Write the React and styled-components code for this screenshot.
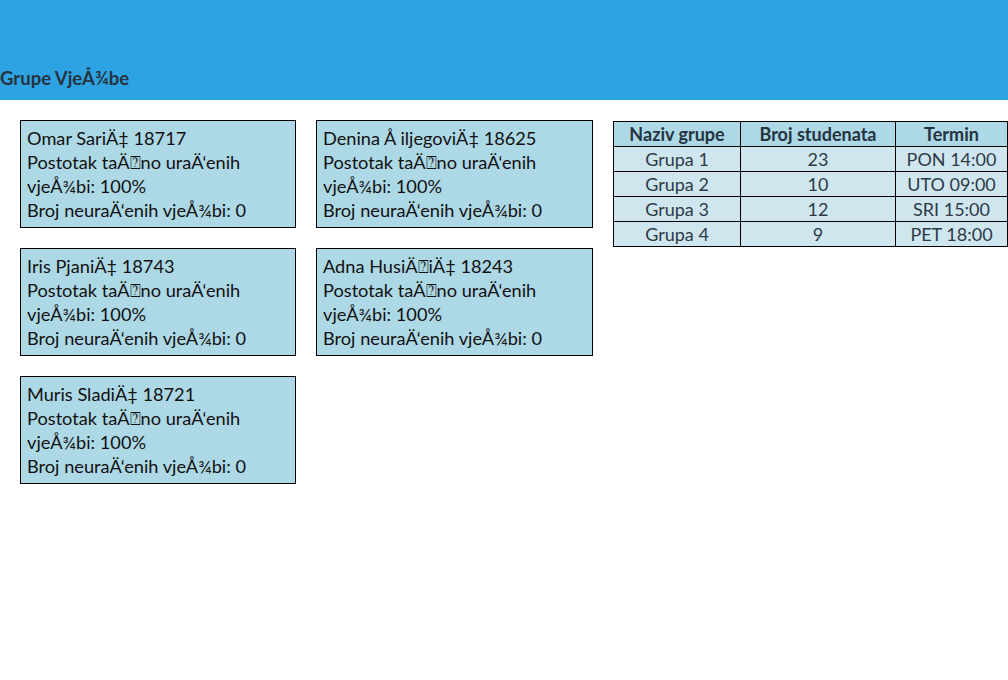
import React from 'react'
import styled, { createGlobalStyle } from 'styled-components'

const students = [
    { name: 'Omar SariÄ‡', index: 18717 },
    { name: 'Denina Å\u00a0iljegoviÄ‡', index: 18625 },
    { name: 'Iris PjaniÄ‡', index: 18743 },
    { name: 'Adna HusiÄ\u2370iÄ‡', index: 18243 },
    { name: 'Muris SladiÄ‡', index: 18721 },
]

const groups = [
    { name: 'Grupa 1', count: 23, term: 'PON 14:00' },
    { name: 'Grupa 2', count: 10, term: 'UTO 09:00' },
    { name: 'Grupa 3', count: 12, term: 'SRI 15:00' },
    { name: 'Grupa 4', count: 9, term: 'PET 18:00' },
]

export default function App() {
    return (
        <>
            <GlobalStyle />
            <Header>
                <Title>Grupe VjeÅ¾be</Title>
            </Header>
            <Content>
                <CardGrid>
                    {students.map(s => (
                        <Card key={s.index}>
                            {s.name} {s.index}<br />
                            Postotak taÄ{'\u2370'}no uraÄ‘enih vjeÅ¾bi: 100%<br />
                            Broj neuraÄ‘enih vjeÅ¾bi: 0
                        </Card>
                    ))}
                </CardGrid>
                <Table>
                    <thead>
                        <tr>
                            <Th $w={126}>Naziv grupe</Th>
                            <Th $w={154}>Broj studenata</Th>
                            <Th>Termin</Th>
                        </tr>
                    </thead>
                    <tbody>
                        {groups.map(g => (
                            <tr key={g.name}>
                                <Td>{g.name}</Td>
                                <Td>{g.count}</Td>
                                <Td>{g.term}</Td>
                            </tr>
                        ))}
                    </tbody>
                </Table>
            </Content>
        </>
    )
}

const GlobalStyle = createGlobalStyle`
    body {
        margin: 0;
        font-family: Lato, "Open Sans", sans-serif;
        background: #fff;
    }
`;

const Header = styled.div`
    height: 100px;
    background-color: #2ea3e3;
    display: flex;
    align-items: flex-end;
    padding-bottom: 11px;
    box-sizing: border-box;
`;

const Title = styled.h2`
    margin: 0;
    font-size: 18.5px;
    font-weight: bold;
    color: #263340;
`;

const Content = styled.div`
    display: flex;
    align-items: flex-start;
    padding: 20px 0 0 20px;
`;

const CardGrid = styled.div`
    display: grid;
    grid-template-columns: 276px 277px;
    gap: 20px;
`;

const Card = styled.div`
    box-sizing: border-box;
    height: 108px;
    border: 1px solid #000;
    background-color: #add8e6;
    padding: 5px 6px;
    font-size: 18.2px;
    line-height: 24px;
    color: #111;
`;

const Table = styled.table`
    margin-left: 20px;
    margin-top: 1px;
    width: 396px;
    border-collapse: collapse;
    background-color: #d0e6ee;
    font-size: 18px;
    color: #2c3a48;
`;

const Th = styled.th`
    width: ${p => (p.$w ? `${p.$w}px` : 'auto')};
    border: 1px solid #000;
    background-color: #add8e6;
    font-weight: bold;
    height: 24px;
    padding: 0;
    color: #263340;
`;

const Td = styled.td`
    border: 1px solid #000;
    text-align: center;
    height: 24px;
    padding: 0;
`;
